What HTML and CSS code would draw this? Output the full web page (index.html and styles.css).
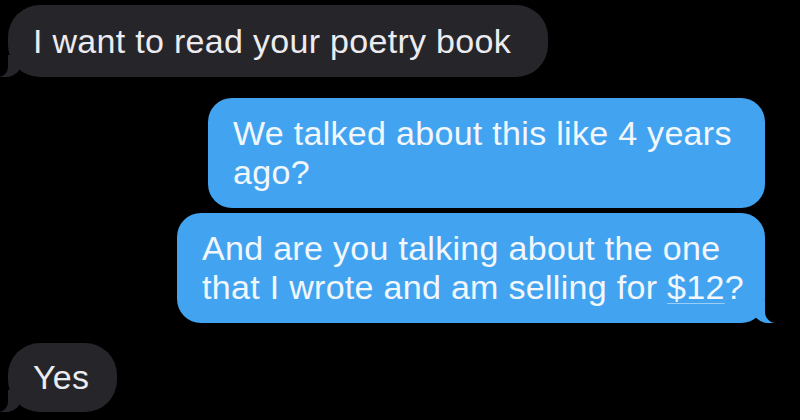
FILE: index.html
```html
<!DOCTYPE html>
<html>
<head>
<meta charset="utf-8">
<link rel="stylesheet" href="styles.css">
</head>
<body>
<div class="thread">
  <div class="row row-in">
    <div class="bubble in tail b1">I want to read your poetry book</div>
  </div>
  <div class="row row-out gap-lg">
    <div class="bubble out b2">We talked about this like 4 years<br>ago?</div>
  </div>
  <div class="row row-out gap-sm">
    <div class="bubble out tail b3">And are you talking about the one<br>that I wrote and am selling for <span class="link">$12</span>?</div>
  </div>
  <div class="row row-in gap-lg2">
    <div class="bubble in tail b4">Yes</div>
  </div>
</div>
</body>
</html>
```

FILE: styles.css
```css
html, body {
  margin: 0;
  padding: 0;
  background: #000;
}
body {
  width: 800px;
  height: 420px;
  overflow: hidden;
  font-family: "Liberation Sans", Arial, sans-serif;
}
.thread {
  display: flex;
  flex-direction: column;
  padding-top: 5px;
}
.row {
  display: flex;
}
.row-in {
  justify-content: flex-start;
  padding-left: 8px;
}
.row-out {
  justify-content: flex-end;
  padding-right: 35px;
}
.gap-lg { margin-top: 21px; }
.gap-sm { margin-top: 5px; }
.gap-lg2 { margin-top: 20px; }

.bubble {
  position: relative;
  box-sizing: border-box;
  font-size: 34px;
  letter-spacing: 0.3px;
  line-height: 39px;
  white-space: nowrap;
  padding: 0 25px;
  display: flex;
  align-items: center;
}
.in {
  background: #262529;
  color: #ecebf0;
  border-radius: 32px;
}
.out {
  background: #42a4f0;
  color: #f2f7fc;
  border-radius: 24px;
  display: block;
  padding-top: 16px;
}
.b1 { width: 540px; height: 72px; }
.b2 { width: 557px; height: 110px; }
.b3 { width: 588px; height: 110px; }
.b4 { width: 109px; height: 69px; }

.link {
  text-decoration: underline;
  text-decoration-color: rgba(230, 240, 250, 0.55);
  text-decoration-thickness: 1px;
  text-underline-offset: 4px;
}

/* tails */
.in.tail::before,
.in.tail::after,
.out.tail::before,
.out.tail::after {
  content: "";
  position: absolute;
  bottom: 0;
  height: 22px;
}
.in.tail::before {
  left: -8px;
  width: 22px;
  background: #262529;
  border-bottom-right-radius: 16px;
}
.in.tail::after {
  left: -10px;
  width: 10px;
  background: #000;
  border-bottom-right-radius: 10px;
}
.out.tail::before {
  right: -11px;
  width: 24px;
  background: #42a4f0;
  border-bottom-left-radius: 16px;
}
.out.tail::after {
  right: -14px;
  width: 14px;
  background: #000;
  border-bottom-left-radius: 11px;
}
```
